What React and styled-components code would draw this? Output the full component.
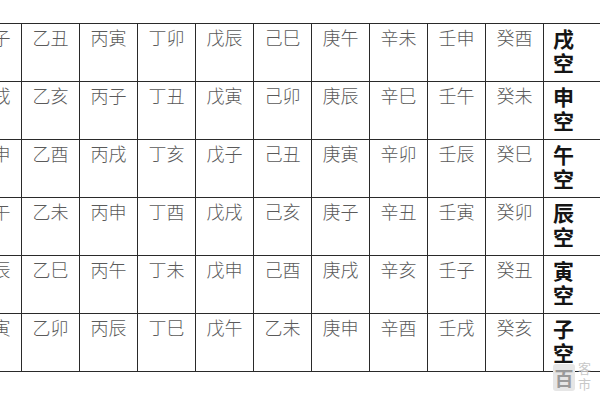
import React from "react";
import styled, { createGlobalStyle } from "styled-components";

const Global = createGlobalStyle`
  html, body { margin: 0; padding: 0; background: #fff; overflow: hidden; }
  body { width: 600px; height: 400px; font-family: "Noto Sans CJK SC", "Noto Sans", sans-serif; }
`;

const Page = styled.div`
  position: relative;
  width: 600px;
  height: 400px;
  overflow: hidden;
  background: #fff;
`;

const Grid = styled.div`
  display: grid;
  grid-template-columns: repeat(10, 58px) 80px;
  grid-auto-rows: 58px;
  margin: 23px 0 0 -37px;
  width: max-content;
  border-top: 1px solid #2a2a2a;
  border-left: 1px solid #2a2a2a;
`;

const Cell = styled.div`
  box-sizing: border-box;
  border-right: 1px solid #2a2a2a;
  border-bottom: 1px solid #2a2a2a;
  text-align: center;
  padding-top: 1px;
  font-size: 18px;
  line-height: 24px;
  color: #5a5a5a;
  font-weight: 300;
`;

const KongCell = styled.div`
  box-sizing: border-box;
  border-bottom: 1px solid #2a2a2a;
  padding: 2px 0 0 9px;
  font-size: 21px;
  line-height: 24px;
  font-weight: 700;
  color: #151515;
  display: flex;
  flex-direction: column;
`;

const Mark = styled.div`
  position: absolute;
  left: 553px;
  top: 364px;
  width: 22px;
  height: 27px;
  border-radius: 3px;
  background: #e6e6e6;
  color: #9a9a9a;
  font-size: 19px;
  line-height: 27px;
  text-align: center;
  font-weight: 700;
`;

const MarkText = styled.div`
  position: absolute;
  left: 578px;
  top: 360px;
  color: #c8c8c8;
  font-size: 13px;
  line-height: 16px;
  width: 22px;
`;

const rows = [
  { cells: ["甲子","乙丑","丙寅","丁卯","戊辰","己巳","庚午","辛未","壬申","癸酉"], k: "戌" },
  { cells: ["甲戌","乙亥","丙子","丁丑","戊寅","己卯","庚辰","辛巳","壬午","癸未"], k: "申" },
  { cells: ["甲申","乙酉","丙戌","丁亥","戊子","己丑","庚寅","辛卯","壬辰","癸巳"], k: "午" },
  { cells: ["甲午","乙未","丙申","丁酉","戊戌","己亥","庚子","辛丑","壬寅","癸卯"], k: "辰" },
  { cells: ["甲辰","乙巳","丙午","丁未","戊申","己酉","庚戌","辛亥","壬子","癸丑"], k: "寅" },
  { cells: ["甲寅","乙卯","丙辰","丁巳","戊午","乙未","庚申","辛酉","壬戌","癸亥"], k: "子" },
];

export default function App() {
  return (
    <Page>
      <Global />
      <Grid>
        {rows.map((r, i) => (
          <React.Fragment key={i}>
            {r.cells.map((c, j) => (
              <Cell key={j}>{c}</Cell>
            ))}
            <KongCell>
              <span>{r.k}</span>
              <span>空</span>
            </KongCell>
          </React.Fragment>
        ))}
      </Grid>
      <Mark>百</Mark>
      <MarkText>客<br />市</MarkText>
    </Page>
  );
}
